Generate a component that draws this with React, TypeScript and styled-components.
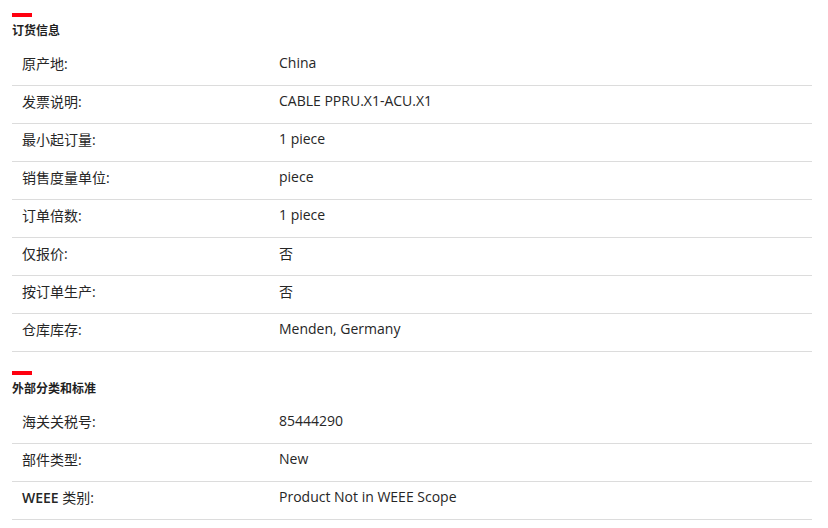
import React from "react";
import styled, { createGlobalStyle } from "styled-components";

const Global = createGlobalStyle`
  html, body { margin: 0; padding: 0; background: #ffffff; }
  body { font-family: "Open Sans", "Noto Sans CJK SC", sans-serif; color: #262626; }
`;

const Page = styled.div`
  width: 800px;
  padding: 13px 16px 0 12px;
`;

const Section = styled.section`
  & + & { margin-top: 19px; }
`;

const Accent = styled.div`
  width: 20px;
  height: 4px;
  background: #ff000f;
`;

const Title = styled.h2`
  margin: 5px 0 0;
  font-family: "Noto Sans CJK SC", sans-serif;
  font-size: 12px;
  line-height: 16px;
  font-weight: 700;
  color: #1f1f1f;
`;

const Rows = styled.div`
  margin-top: 10px;
`;

const Row = styled.div`
  display: grid;
  grid-template-columns: 257px 1fr;
  align-items: center;
  padding-left: 10px;
  padding-bottom: 8px;
  height: 29px;
  border-bottom: 1px solid #dcdcdc;
`;

const Label = styled.div`
  font-family: "Open Sans", "Noto Sans CJK SC", sans-serif;
  font-size: 14px;
  color: #262626;
`;

const Latin = styled.span`
  font-weight: 600;
`;

const Value = styled.div`
  font-family: "Open Sans", "Noto Sans CJK SC", sans-serif;
  font-size: 14px;
  color: #262626;
`;

type RowData = { label: React.ReactNode; value: string; key: string };

const sections: { title: string; rows: RowData[] }[] = [
  {
    title: "订货信息",
    rows: [
      { key: "a", label: "原产地:", value: "China" },
      { key: "b", label: "发票说明:", value: "CABLE PPRU.X1-ACU.X1" },
      { key: "c", label: "最小起订量:", value: "1 piece" },
      { key: "d", label: "销售度量单位:", value: "piece" },
      { key: "e", label: "订单倍数:", value: "1 piece" },
      { key: "f", label: "仅报价:", value: "否" },
      { key: "g", label: "按订单生产:", value: "否" },
      { key: "h", label: "仓库库存:", value: "Menden, Germany" },
    ],
  },
  {
    title: "外部分类和标准",
    rows: [
      { key: "i", label: "海关关税号:", value: "85444290" },
      { key: "j", label: "部件类型:", value: "New" },
      {
        key: "k",
        label: (
          <>
            <Latin>WEEE</Latin> 类别:
          </>
        ),
        value: "Product Not in WEEE Scope",
      },
    ],
  },
];

export default function App() {
  return (
    <>
      <Global />
      <Page>
        {sections.map((s) => (
          <Section key={s.title}>
            <Accent />
            <Title>{s.title}</Title>
            <Rows>
              {s.rows.map((r) => (
                <Row key={r.key}>
                  <Label>{r.label}</Label>
                  <Value>{r.value}</Value>
                </Row>
              ))}
            </Rows>
          </Section>
        ))}
      </Page>
    </>
  );
}
